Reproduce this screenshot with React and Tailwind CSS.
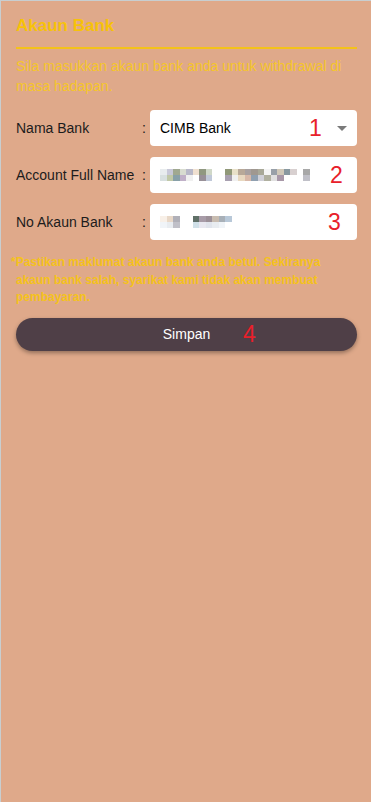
import React from "react";

const nameTop = ["#e8ecee", "#c8c8d8", "#a0a890", "#d8dcd0", "#b8b8c8", "#f0e0d0", "#909880", "#d0d8c8", "#ffffff", "#ffffff", "#909878", "#e8e0c8", "#b8a898", "#a8a0a0", "#a09890", "#a8a898", "#f4f4f4", "#98a0a8", "#d0c8b8", "#8898a0", "#d8d0d0", "#ffffff", "#a8a8a8"];
const nameBottom = ["#d8e0e0", "#c0c8a8", "#88a0a8", "#c0b0c8", "#f0f0f0", "#ffffff", "#989098", "#c0c8d8", "#ffffff", "#ffffff", "#a8a0b0", "#f0f0f0", "#e8d8c0", "#d8b8a8", "#90a0b0", "#d0d0d8", "#b0b0a0", "#e0e0e0", "#a898a8", "#ffffff", "#ffffff", "#ffffff", "#c0c0c8"];
const noTop = ["#f8f0e8", "#e8d8c8", "#b0b0b8", "#ffffff", "#ffffff", "#607068", "#a89ca8", "#9c9098", "#c8bcb0", "#a8b0b8", "#b8c8d8"];
const noBottom = ["#f0f4f8", "#e8ecf0", "#c0c0c8", "#ffffff", "#ffffff", "#d0e0e8", "#e8e8f0", "#e0e4ec", "#e8ecf0", "#f0f4f8", "#ffffff"];

// pixelated (blurred) personal data
function Mosaic({ top, bottom }) {
  return (
    <div className="flex flex-col">
      {[top, bottom].map((row, r) => (
        <div key={r} className="flex">
          {row.map((c, i) => (
            <div key={i} className="w-[6.5px] h-[6px]" style={{ backgroundColor: c }} />
          ))}
        </div>
      ))}
    </div>
  );
}

function Row({ label, children, num, numClass }) {
  return (
    <div className="flex items-center">
      <div className="w-[126px] text-[14px] text-[#1c1c1c]">{label}</div>
      <div className="w-[8px] text-[14px] text-[#1c1c1c]">:</div>
      <div className="relative flex-1 h-[36px] bg-white rounded-[4px] flex items-center pl-[10px]">
        {children}
        <span className={"absolute top-1/2 -translate-y-1/2 text-[23px] leading-none text-[#e8202a] " + numClass}>{num}</span>
      </div>
    </div>
  );
}

export default function App() {
  return (
    <div
      className="min-h-screen bg-[#dfa98a] border-t border-l border-[#c8ced0] pl-[15px] pr-[14px] pt-[14px]"
      style={{ fontFamily: '"Liberation Sans", Arial, sans-serif' }}
    >
      <h1 className="text-[17px] font-bold text-[#f7c20a] leading-[22px]">Akaun Bank</h1>
      <div className="mt-[10px] h-[2px] bg-[#f4c21a]" />
      <p className="mt-[7px] text-[14px] leading-[20px] text-[#f6c62a] pr-[8px]">
        Sila masukkan akaun bank anda untuk withdrawal di masa hadapan.
      </p>

      <div className="mt-[14px] flex flex-col gap-[11px]">
        <Row label="Nama Bank" num="1" numClass="left-[159px]">
          <span className="text-[14px] text-black">CIMB Bank</span>
          <span className="absolute right-[10px] top-[16px] w-0 h-0 border-l-[5px] border-r-[5px] border-t-[5px] border-l-transparent border-r-transparent border-t-[#7a7a7a]" />
        </Row>
        <Row label="Account Full Name" num="2" numClass="left-[180px]">
          <Mosaic top={nameTop} bottom={nameBottom} />
        </Row>
        <Row label="No Akaun Bank" num="3" numClass="left-[178px]">
          <Mosaic top={noTop} bottom={noBottom} />
        </Row>
      </div>

      <p className="mt-[14px] text-[12px] font-bold leading-[17.5px] text-[#f5c21c] pr-[28px] -indent-[5px]">
        *Pastikan maklumat akaun bank anda betul. Sekiranya akaun bank salah, syarikat kami tidak akan membuat pembayaran.
      </p>

      <button className="relative mt-[11px] w-full h-[33px] rounded-full bg-[#4f3f47] text-white text-[14px] shadow-[0_2px_4px_rgba(0,0,0,0.35)]">
        Simpan
        <span className="absolute left-[227px] top-1/2 -translate-y-1/2 text-[23px] leading-none text-[#e8202a]">4</span>
      </button>
    </div>
  );
}
